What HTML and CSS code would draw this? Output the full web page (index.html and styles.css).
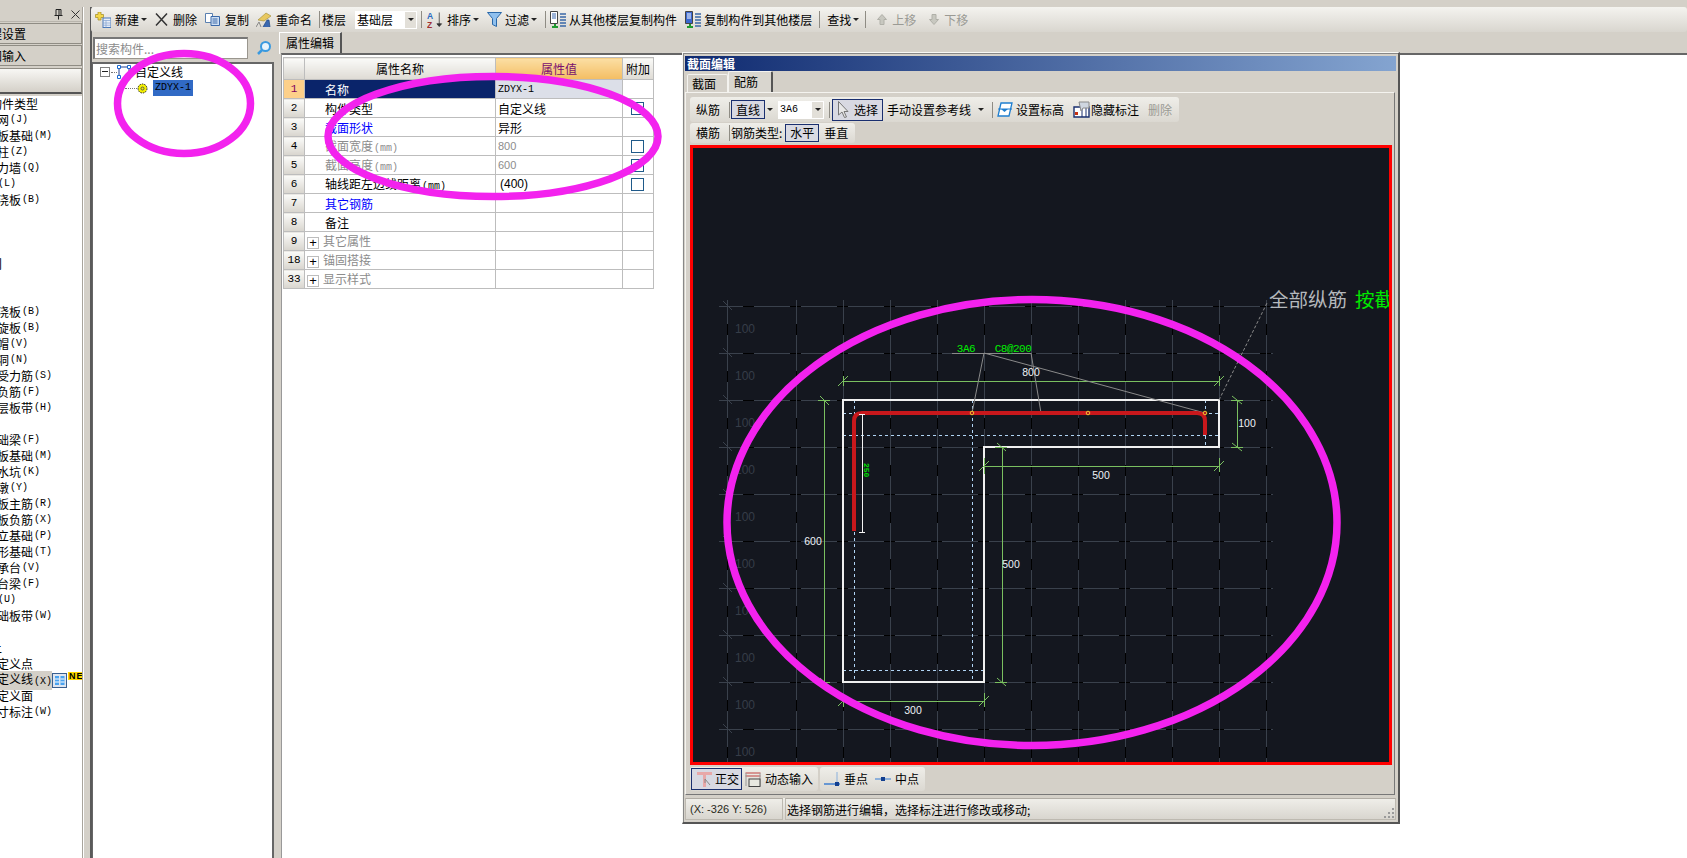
FILE: index.html
```html
<!DOCTYPE html>
<html lang="zh">
<head>
<meta charset="utf-8">
<title>截面编辑</title>
<link rel="stylesheet" href="styles.css">
</head>
<body>
<div class="app">
  <aside class="nav">
    <div class="nav-head">
      <svg class="ico-pin" viewBox="0 0 9 11"><path d="M2 0.5h5v6h-5zM5 1v5.5M0.5 6.5h8M4.5 6.5v4" fill="none" stroke="#222"/></svg>
      <svg class="ico-close" viewBox="0 0 9 9"><path d="M0.5 0.5l8 8M8.5 0.5l-8 8" stroke="#333" fill="none"/></svg>
    </div>
    <div class="nav-btn">工程设置</div>
    <div class="nav-btn">绘图输入</div>
    <div class="nav-btn blank"></div>
    <div class="nav-list">
      <div class="li shift">构件类型</div>
      <div class="li">轴网<span class="lat">(J)</span></div>
      <div class="li">筏板基础<span class="lat">(M)</span></div>
      <div class="li">框柱<span class="lat">(Z)</span></div>
      <div class="li">剪力墙<span class="lat">(Q)</span></div>
      <div class="li">梁<span class="lat">(L)</span></div>
      <div class="li">现浇板<span class="lat">(B)</span></div>
      <div class="li"></div>
      <div class="li"></div>
      <div class="li"></div>
      <div class="li shift">门</div>
      <div class="li"></div>
      <div class="li"></div>
      <div class="li">现浇板<span class="lat">(B)</span></div>
      <div class="li">螺旋板<span class="lat">(B)</span></div>
      <div class="li">柱帽<span class="lat">(V)</span></div>
      <div class="li">板洞<span class="lat">(N)</span></div>
      <div class="li">板受力筋<span class="lat">(S)</span></div>
      <div class="li">板负筋<span class="lat">(F)</span></div>
      <div class="li">楼层板带<span class="lat">(H)</span></div>
      <div class="li"></div>
      <div class="li">基础梁<span class="lat">(F)</span></div>
      <div class="li">筏板基础<span class="lat">(M)</span></div>
      <div class="li">集水坑<span class="lat">(K)</span></div>
      <div class="li">柱墩<span class="lat">(Y)</span></div>
      <div class="li">筏板主筋<span class="lat">(R)</span></div>
      <div class="li">筏板负筋<span class="lat">(X)</span></div>
      <div class="li">独立基础<span class="lat">(P)</span></div>
      <div class="li">条形基础<span class="lat">(T)</span></div>
      <div class="li">桩承台<span class="lat">(V)</span></div>
      <div class="li">承台梁<span class="lat">(F)</span></div>
      <div class="li">桩<span class="lat">(U)</span></div>
      <div class="li">基础板带<span class="lat">(W)</span></div>
      <div class="li"></div>
      <div class="li shift">上</div>
      <div class="li">自定义点</div>
      <div class="li current"><span class="cur-text">自定义线<span class="lat">(X)</span></span>
        <svg class="ico-grid" viewBox="0 0 15 15"><rect x="0.5" y="0.5" width="14" height="14" fill="#dfe6f0" stroke="#3a5f8f"/><path d="M3 3h4v9h-4zM8.500 3h4v9h-4z" fill="#4aa3f0"/><path d="M3 6h4M3 9h4M8.500 6h4M8.500 9h4" stroke="#fff"/></svg>
        <span class="new-tag">NE</span>
      </div>
      <div class="li">自定义面</div>
      <div class="li">尺寸标注<span class="lat">(W)</span></div>
    </div>
  </aside>
  <div class="split-a"></div>
  <main class="main">
    <div class="toolbar">
      <span class="tb tb-new"><svg class="ic16" viewBox="0 0 16 16"><path d="M3 0h3v2.500h2.500v3h-2.500v2.500h-3v-2.500h-2.500v-3h2.500z" fill="#f4d84a" stroke="#a08a20" stroke-width=".7"/><rect x="8" y="6" width="8" height="9.500" fill="#e8eef8" stroke="#4a78b8"/><path d="M8 8.500h8M8 11h8M8 13.200h8M11 8.500v7" stroke="#7fa0d0" stroke-width=".7"/></svg>新建<i class="caret"></i></span>
      <span class="tb tb-del"><svg class="ic13" viewBox="0 0 13 13"><path d="M1 0.500l11 12M12 0.500l-11 12" stroke="#333" stroke-width="1.500" fill="none"/></svg>删除</span>
      <span class="tb tb-copy"><svg class="ic15" viewBox="0 0 15 13"><path d="M0.500 0.500h7v9h-7z" fill="#fff" stroke="#5a80b0"/><path d="M6 3.500h8.500v9h-8.500z" fill="#cfe0f4" stroke="#3a68a8"/><path d="M7.500 6h5M7.500 8h5M7.500 10h5" stroke="#3a68a8"/></svg>复制</span>
      <span class="tb tb-ren"><svg class="ic16" viewBox="0 0 16 16"><path d="M2 8l8-7 5 3-7 5z" fill="#e8c860" stroke="#a08a30" stroke-width=".6"/><path d="M0 15l3-5 2 5" fill="none" stroke="#888"/><path d="M7 15l4-7 2 0 1 7" fill="#3a68b0" stroke="#204880" stroke-width=".7"/></svg>重命名</span>
      <span class="sep s-floor"></span>
      <span class="tb-label">楼层</span>
      <span class="combo floor"><span class="combo-text">基础层</span><span class="combo-arrow"><i class="caret"></i></span></span>
      <span class="sep s-sort"></span>
      <span class="tb tb-sort"><svg class="ic16w" viewBox="0 0 17 18"><text x="0" y="8" class="az a">A</text><text x="0" y="17" class="az z">Z</text><path d="M13 1v14M10.500 13l2.500 3 2.500-3z" stroke="#333" fill="#333" stroke-width=".8"/></svg>排序<i class="caret"></i></span>
      <span class="tb tb-filter"><svg class="ic15" viewBox="0 0 15 15"><path d="M0.500 0.500h14l-5 6v8l-4-2v-6z" fill="#8fc0ee" stroke="#2a68a8"/></svg>过滤<i class="caret"></i></span>
      <span class="sep s-copy"></span>
      <span class="tb tb-from"><svg class="ic17" viewBox="0 0 17 18"><path d="M0.500 0.500h7v12h-7z" fill="#fff" stroke="#444"/><path d="M2 3h4M2 5h4M2 7h4" stroke="#3a68b0"/><path d="M10 3h6M10 6h6M10 9h6M10 12h6M10 15h6" stroke="#3a68a8" stroke-width="1.500"/><path d="M2 15h2v-2h2v2h2v2h-6z" fill="#1f9a30"/></svg>从其他楼层复制构件</span>
      <span class="tb tb-to"><svg class="ic17" viewBox="0 0 17 18"><path d="M0.500 0.500h7v12h-7z" fill="#3a68d0" stroke="#444"/><path d="M2 3h4M2 5h4M2 7h4" stroke="#fff"/><path d="M10 3h6M10 6h6M10 9h6M10 12h6M10 15h6" stroke="#3a68a8" stroke-width="1.500"/><path d="M2 15h2v-2h2v2h2v2h-6z" fill="#1f9a30"/></svg>复制构件到其他楼层</span>
      <span class="sep s-find"></span>
      <span class="tb tb-find">查找<i class="caret"></i></span>
      <span class="sep s-up"></span>
      <span class="tb off tb-up"><svg class="ic10" viewBox="0 0 10 11"><path d="M5 0.500l4.500 5h-2.500v5h-4v-5h-2.500z" fill="#c8c8c0" stroke="#b0b0a8"/></svg>上移</span>
      <span class="tb off tb-down"><svg class="ic10" viewBox="0 0 10 11"><path d="M5 10.500l4.500-5h-2.500v-5h-4v5h-2.500z" fill="#c8c8c0" stroke="#b0b0a8"/></svg>下移</span>
    </div>
    <div class="work">
      <section class="tree-col">
        <div class="search-row">
          <div class="search">搜索构件...</div>
          <svg class="ico-search" viewBox="0 0 16 16"><circle cx="9.500" cy="6.500" r="4.500" fill="#e8f4fc" stroke="#3a9ae0" stroke-width="2"/><path d="M6 10l-4 4" stroke="#3a9ae0" stroke-width="2.500"/></svg>
        </div>
        <div class="tree">
          <div class="node root">
            <span class="minus"></span><span class="dots short"></span>
            <svg class="ico-line" viewBox="0 0 14 14"><path d="M2 2h10v10M2 2v10" fill="none" stroke="#1f3f8f"/><path d="M0.500 0.500h3v3h-3zM10.500 0.500h3v3h-3zM0.500 10.500h3v3h-3z" fill="#fff" stroke="#1a6ad0"/></svg>
            <span class="node-text">自定义线</span>
          </div>
          <div class="node child">
            <span class="dots long"></span>
            <svg class="ico-sun" viewBox="0 0 11 11"><circle cx="5.500" cy="5.500" r="4.500" fill="#f4f000" stroke="#222" stroke-dasharray="1.500 1"/><circle cx="5.500" cy="5.500" r="1.500" fill="#f4f000" stroke="#555"/></svg>
            <span class="node-sel">ZDYX-1</span>
          </div>
        </div>
      </section>
      <div class="split-b"></div>
      <section class="prop-col">
        <div class="tabstrip"><span class="tab-prop">属性编辑</span></div>
        <div class="pane">
          <table class="grid">
            <colgroup><col class="c0"><col class="c1"><col class="c2"><col class="c3"></colgroup>
            <thead>
              <tr><th class="rh"></th><th>属性名称</th><th class="val-head">属性值</th><th>附加</th></tr>
            </thead>
            <tbody>
              <tr><td class="rh sel">1</td><td class="name cur">名称</td><td class="val code">ZDYX-1</td><td></td></tr>
              <tr><td class="rh">2</td><td class="name">构件类型</td><td class="val">自定义线</td><td><span class="chk"></span></td></tr>
              <tr><td class="rh">3</td><td class="name blue">截面形状</td><td class="val">异形</td><td></td></tr>
              <tr><td class="rh">4</td><td class="name grey">截面宽度<span class="lat">(mm)</span></td><td class="val grey lat-val">800</td><td><span class="chk"></span></td></tr>
              <tr><td class="rh">5</td><td class="name grey">截面高度<span class="lat">(mm)</span></td><td class="val grey lat-val">600</td><td><span class="chk"></span></td></tr>
              <tr><td class="rh">6</td><td class="name">轴线距左边线距离<span class="lat">(mm)</span></td><td class="val sans">(400)</td><td><span class="chk"></span></td></tr>
              <tr><td class="rh">7</td><td class="name blue">其它钢筋</td><td></td><td></td></tr>
              <tr><td class="rh">8</td><td class="name">备注</td><td></td><td></td></tr>
              <tr><td class="rh">9</td><td class="name grey"><span class="plus">+</span>其它属性</td><td></td><td></td></tr>
              <tr><td class="rh">18</td><td class="name grey"><span class="plus">+</span>锚固搭接</td><td></td><td></td></tr>
              <tr><td class="rh">33</td><td class="name grey"><span class="plus">+</span>显示样式</td><td></td><td></td></tr>
            </tbody>
          </table>
        </div>
      </section>
    </div>
  </main>
</div>

<div class="win">
  <div class="win-title">截面编辑</div>
  <div class="win-tabs"><span class="wt">截面</span><span class="wt on">配筋</span></div>
  <div class="win-pane">
    <div class="bar bar1">
      <span class="b-t w-zong">纵筋</span><span class="vsep"></span>
      <span class="press p-line">直线</span><i class="caret c1"></i>
      <span class="combo rebar"><span class="combo-text mono">3A6</span><span class="combo-arrow"><i class="caret"></i></span></span>
      <span class="vsep v2"></span>
      <span class="press p-sel"><svg class="ic-cur" viewBox="0 0 11 17"><path d="M0.500 0.500l9.500 10h-4l2.500 5.500-2 .5-2.500-5.500-3.500 3z" fill="#e8e8e8" stroke="#777"/></svg>选择</span>
      <span class="b-t manual">手动设置参考线</span><i class="caret c2"></i>
      <span class="vsep v3"></span>
      <svg class="ic-h" viewBox="0 0 16 15"><path d="M4 1h11l-3 13h-11z" fill="#fff" stroke="#1f7fd0" stroke-width="1.300"/><path d="M4 7l3.500 3 3.500-3z" fill="#1f7fd0"/><path d="M1 7h14" stroke="#1f7fd0"/></svg>
      <span class="b-t set">设置标高</span>
      <svg class="ic-hide" viewBox="0 0 18 17"><path d="M1 6h15v10h-15z" fill="#fff" stroke="#1a2f6f" stroke-width="1.400"/><path d="M9 6v10M13 6v10" stroke="#1a2f6f"/><path d="M6 1h10v6h-6l-2 3z" fill="#cfd6e0" stroke="#8a8a8a"/><rect x="2" y="11" width="3" height="3" fill="#c83010"/></svg>
      <span class="b-t">隐藏标注</span>
      <span class="b-t off del">删除</span>
    </div>
    <div class="bar bar2">
      <span class="b-t w-zong">横筋</span><span class="vsep"></span>
      <span class="b-t type">钢筋类型:</span>
      <span class="press p-h">水平</span>
      <span class="b-t vert">垂直</span>
    </div>
    <div class="canvas">
      <svg class="drawing" viewBox="693 148 696 614">
        <g class="g-base">
          <path d="M727 300V762M796 300V762M843 300V762M890 300V762M937 300V762M984 300V762M1031 300V762M1078 300V762M1125 300V762M1172 300V762M1219 300V762M1266 300V762"/>
          <path d="M719 306H1273M719 353H1273M719 400H1273M719 447H1273M719 494H1273M719 541H1273M719 588H1273M719 635H1273M719 682H1273M719 729H1273"/>
        </g>
        <g class="g-over">
          <path d="M727 300V762M796 300V762M843 300V762M890 300V762M937 300V762M984 300V762M1031 300V762M1078 300V762M1125 300V762M1172 300V762M1219 300V762M1266 300V762"/>
          <path d="M719 306H1273M719 353H1273M719 400H1273M719 447H1273M719 494H1273M719 541H1273M719 588H1273M719 635H1273M719 682H1273M719 729H1273"/>
        </g>
        <path class="g-tick" d="M723 301l9 9M723 348l9 9M723 395l9 9M723 442l9 9M723 489l9 9M723 536l9 9M723 583l9 9M723 630l9 9M723 677l9 9M723 724l9 9"/>
        <g class="lbl100">
          <text x="735" y="333">100</text><text x="735" y="380">100</text><text x="735" y="427">100</text>
          <text x="735" y="474">100</text><text x="735" y="521">100</text><text x="735" y="568">100</text>
          <text x="735" y="615">100</text><text x="735" y="662">100</text><text x="735" y="709">100</text><text x="735" y="756">100</text>
        </g>
        <path class="dash-blue" d="M843 413H1219M843 435H1219M843 670H984M854 400V682M972 400V682M1205 400V447"/>
        <path class="outline" d="M843 400H1219V447H984V682H843Z"/>
        <path class="dim" d="M843 381H1219M843 376v10M1219 376v10M1237 400V447M1231 400h12M1231 447h12M984 466H1219M984 458v16M1219 458v14M1002 447V682M995 447h12M995 682h12M824 400V682M818 400h12M818 682h12M843 701H984M843 695v12M984 693v14"/>
        <path class="dim-tick" d="M838 386l10-10M1214 386l10-10M1232 396l10 8M1232 443l10 8M979 471l10-10M1214 471l10-10M997 443l9 8M997 678l9 8M820 396l9 9M820 678l9 8M838 706l10-10M979 706l10-10"/>
        <path class="lead" d="M952 353H1031"/>
        <path class="lead-d" d="M984 353L972 413M984 353L1205 413M1031 353L1041 413"/>
        <path class="lead-dot" d="M1219 400L1267 303"/>
        <path class="rebar-line" d="M854 531V421Q854 413 862 413H1197Q1205 413 1205 421V435"/>
        <path class="white-dim" d="M862 414V532M859 414h6M859 532h6"/>
        <g class="pts"><circle cx="972" cy="413" r="1.800"/><circle cx="1088" cy="413" r="1.800"/><circle cx="1205" cy="413" r="1.800"/></g>
        <text class="lbl-green" x="966" y="352" text-anchor="middle">3A6</text>
        <text class="lbl-green" x="1013" y="352" text-anchor="middle">C8@200</text>
        <text class="lbl-tiny" transform="translate(864,463) rotate(90)">250</text>
        <g class="lbl-white">
          <text x="1031" y="376" text-anchor="middle">800</text>
          <text x="1247" y="427" text-anchor="middle">100</text>
          <text x="1101" y="479" text-anchor="middle">500</text>
          <text x="813" y="545" text-anchor="middle">600</text>
          <text x="1011" y="568" text-anchor="middle">500</text>
          <text x="913" y="714" text-anchor="middle">300</text>
        </g>
        <text class="lbl-big" x="1269" y="307">全部纵筋<tspan class="lbl-big-g" dx="8">按截面</tspan></text>
      </svg>
    </div>
    <div class="snapbar">
      <div class="snap-group g1">
        <span class="press p-ortho"><svg class="ic-ortho" viewBox="0 0 15 16"><path d="M0 1h15v3h-6v12h-3v-12h-6z" fill="#e8a8a8"/><path d="M8 8l5 6M8 8v4" stroke="#888"/></svg>正交</span>
        <svg class="ic-dyn" viewBox="0 0 16 15"><path d="M0.500 1h15M0.500 4h15" stroke="#c04040"/><path d="M1 1v13M15 1v13" stroke="#999"/><rect x="4" y="7" width="11" height="7.500" fill="#e8e8e0" stroke="#444"/></svg>
        <span class="b-t">动态输入</span>
      </div>
      <div class="snap-group g2">
        <svg class="ic-pt" viewBox="0 0 16 14"><path d="M0 12h16" stroke="#3f7fd0" stroke-width="1.500"/><path d="M13 0v14" stroke="#8ab0dc"/><rect x="11" y="10" width="4" height="4" fill="#123f90"/></svg>
        <span class="b-t p1">垂点</span>
        <svg class="ic-pt" viewBox="0 0 16 14"><path d="M0 7h16" stroke="#6f9fd8" stroke-width="1.500"/><rect x="6" y="5" width="4" height="4" fill="#123f90"/></svg>
        <span class="b-t">中点</span>
      </div>
    </div>
  </div>
  <div class="status">
    <span class="st st-xy">(X: -326 Y: 526)</span>
    <span class="st st-msg">选择钢筋进行编辑，选择标注进行修改或移动;</span>
    <svg class="grip" viewBox="0 0 12 12"><path d="M9 1h2v2h-2zM9 5h2v2h-2zM5 5h2v2h-2zM9 9h2v2h-2zM5 9h2v2h-2zM1 9h2v2h-2z" fill="#9a9a9a"/></svg>
  </div>
</div>

<svg class="marks" viewBox="0 0 1687 858">
  <ellipse cx="184" cy="103.500" rx="66.500" ry="50"/>
  <ellipse cx="493" cy="136.500" rx="165" ry="60"/>
  <ellipse cx="1032" cy="522.500" rx="305" ry="223"/>
</svg>
</body>
</html>
```
FILE: styles.css
```css
* { box-sizing: border-box; }
html, body { margin: 0; padding: 0; }
body {
  width: 1687px; height: 858px; overflow: hidden; position: relative;
  background: #d4d0c8; color: #000;
  font: 12px/16px "Noto Sans CJK SC", "Liberation Sans", sans-serif;
}
.lat { font: 10px/16px "Liberation Mono", monospace; margin-left: 1px; }
i.caret { display: inline-block; width: 0; height: 0; border: 3px solid transparent; border-top: 3px solid #222; border-bottom: 0; vertical-align: middle; }
.app { display: flex; height: 858px; padding-top: 7px; background: #d4d0c8; }

/* left nav */
.nav { width: 83px; display: flex; flex-direction: column; overflow: hidden; flex: none; border-right: 1px solid #a8a49c; }
.nav-head { height: 15px; display: flex; align-items: center; justify-content: flex-end; gap: 8px; padding-right: 2px; margin-bottom: 1px; background: #d4d0c8; border-bottom: 1px solid #b8b4ac; }
.ico-pin { width: 9px; height: 11px; }
.ico-close { width: 9px; height: 9px; }
.nav-btn { height: 21px; line-height: 19px; margin: 0 0 1px -22px; white-space: nowrap; font-size: 12px; background: #d4d0c8; border: 1px solid #8f8c84; border-left: 0; }
.nav-btn.blank { height: 26px; margin: 1px 0 2px -22px; background: linear-gradient(#f8f7f4, #d4d0c8); border-bottom: 2px solid #555; }
.nav-list { flex: 1; background: #fff; overflow: hidden; }
.li { height: 16px; margin-left: -15px; white-space: nowrap; display: flex; align-items: center; }
.li.shift { margin-left: -10px; }
.li.current { position: relative; }
.cur-text { background: #d4d0c8; padding-left: 15px; margin-left: -15px; width: 82px; flex: none; }
.ico-grid { width: 15px; height: 15px; flex: none; }
.new-tag { font: bold 9px/8px "Liberation Sans", sans-serif; letter-spacing: 1px; background: #ffd800; margin: -8px 0 0 1px; padding: 0 1px; height: 8px; flex: none; }
.split-a { width: 9px; flex: none; background: #d4d0c8; border-left: 1px solid #fff; border-right: 2px solid #5a5a5a; }

/* toolbar */
.main { flex: 1; display: flex; flex-direction: column; min-width: 0; }
.toolbar { height: 25px; margin-left: -1px; display: flex; align-items: center; padding-left: 4px; border-radius: 3px; background: linear-gradient(#f4f3ef, #d9d6cf); white-space: nowrap; }
.tb { display: flex; align-items: center; }
.tb.off { color: #9a9a94; }
.ic16 { width: 16px; height: 16px; margin-right: 4px; flex: none; }
.ic13 { width: 13px; height: 13px; margin-right: 5px; flex: none; }
.ic15 { width: 15px; height: 15px; margin-right: 5px; flex: none; }
.tb-filter .ic15 { margin-right: 3px; }
.ic16w { width: 16px; height: 18px; margin-right: 4px; flex: none; }
.ic17 { width: 17px; height: 18px; margin-right: 2px; flex: none; }
.ic10 { width: 10px; height: 11px; margin-right: 5px; flex: none; }
.tb .caret { margin-left: 2px; }
.az { font: bold 9px "Liberation Sans", sans-serif; }
.az.a { fill: #2a6ac0; }
.az.z { fill: #a03030; }
.tb-del { margin-left: 8px; }
.tb-copy { margin-left: 8px; }
.tb-ren { margin-left: 7px; }
.sep { width: 1px; height: 17px; background: #8f8c84; flex: none; }
.s-floor { margin-left: 7px; }
.tb-label { margin-left: 2px; }
.combo { display: flex; background: #fff; align-items: stretch; flex: none; }
.combo.floor { width: 62px; height: 18px; margin-left: 9px; padding: 1px; }
.combo-text { flex: 1; padding-left: 1px; line-height: 15px; }
.combo-arrow { width: 11px; background: #e2dfd8; display: flex; align-items: center; justify-content: center; }
.s-sort { margin-left: 4px; }
.tb-sort { margin-left: 5px; }
.tb-filter { margin-left: 8px; }
.s-copy { margin-left: 8px; }
.tb-from { margin-left: 4px; }
.tb-to { margin-left: 8px; }
.s-find { margin-left: 7px; }
.tb-find { margin-left: 7px; }
.s-up { margin-left: 6px; }
.tb-up { margin-left: 11px; }
.tb-down { margin-left: 13px; }

/* work area */
.work { flex: 1; display: flex; min-height: 0; }
.tree-col { width: 182px; flex: none; display: flex; flex-direction: column; }
.search-row { height: 30px; display: flex; align-items: flex-start; padding: 5px 0 0 1px; gap: 8px; }
.search { width: 155px; height: 22px; background: #fff; border: 1px solid #9a968e; border-top: 2px solid #777; border-left: 2px solid #777; color: #8c8c8c; font-size: 12px; line-height: 19px; padding-left: 1px; }
.ico-search { width: 16px; height: 16px; margin-top: 3px; }
.tree { flex: 1; background: #fff; border: 1px solid #666; border-width: 2px 2px 0 1px; }
.node { height: 16px; display: flex; align-items: center; white-space: nowrap; }
.minus { width: 10px; height: 10px; margin-left: 7px; border: 1px solid #808080; position: relative; background: #fff; }
.minus::after { content: ""; position: absolute; left: 1px; right: 1px; top: 3px; height: 1px; background: #222; }
.dots { border-top: 1px dotted #777; height: 0; flex: none; }
.dots.short { width: 6px; margin-left: 1px; }
.dots.long { width: 12px; margin-left: 32px; }
.ico-line { width: 14px; height: 14px; flex: none; }
.node-text { margin-left: 4px; }
.ico-sun { width: 11px; height: 11px; flex: none; }
.node-sel { margin-left: 5px; width: 40px; height: 16px; background: #316ac5; font: 10px/16px "Liberation Mono", monospace; text-align: center; color: #000; }
.split-b { width: 8px; flex: none; background: #d4d0c8; }
.prop-col { flex: 1; display: flex; flex-direction: column; min-width: 0; }
.tabstrip { height: 22px; }
.tab-prop { display: block; width: 63px; height: 22px; line-height: 20px; padding-left: 6px; margin-left: -3px; background: #d9d6cf; border-top: 1px solid #fff; border-left: 1px solid #fff; border-right: 2px solid #555; }
.pane { flex: 1; background: #fff; margin: -1px 0 0 -1px; padding: 2px 0 0 1px; border-top: 2px solid #666; border-left: 1px solid #999; }
.grid { border-collapse: collapse; table-layout: fixed; width: 370px; font-size: 12px; }
.c0 { width: 21px; } .c1 { width: 191px; } .c2 { width: 127px; } .c3 { width: 31px; }
.grid th, .grid td { height: 19px; padding: 0; border: 1px solid #bdbdbd; overflow: hidden; white-space: nowrap; line-height: 15px; font-weight: 400; }
.grid thead th { height: 22px; background: linear-gradient(#fafaf8, #dedbd4); }
.grid th.val-head { background: linear-gradient(#fbdfa4, #f4bd62); color: #7a1070; }
.grid .rh { background: linear-gradient(#fbfbf9, #d8d5ce); text-align: center; }
.grid td.rh { font: 11px/15px "Liberation Mono", monospace; }
.grid .rh.sel { background: #fdd08a; color: #800060; }
.grid .lat { line-height: 12px; }
.name { padding-left: 20px !important; }
.grid .name.cur { background: #0a246a; color: #fff; }
.val { padding-left: 2px !important; }
.grid .val.code { background: #dcdfe8; font: 10px/15px "Liberation Mono", monospace; }
.lat-val { font: 11px/15px "Liberation Sans", sans-serif !important; }
.val.sans { font: 12px/15px "Liberation Sans", sans-serif; padding-left: 4px !important; }
.blue { color: #0000ff; }
.grey { color: #8c8c8c; }
.chk { display: block; width: 13px; height: 13px; margin: 1px 0 0 8px; border: 1px solid #1f5a8a; background: #fff; }
.plus { display: inline-block; width: 12px; height: 12px; margin: 0 4px 0 -18px; border: 1px solid #bdbdbd; color: #000; font: 13px/10px "Liberation Sans", sans-serif; text-align: center; vertical-align: -1px; }

/* floating window */
.win { position: absolute; left: 682px; top: 52px; width: 718px; height: 772px; display: flex; flex-direction: column; background: #d4d0c8; border: 1px solid #f8f8f4; border-right: 2px solid #555; border-bottom: 2px solid #555; padding: 3px 2px 1px 2px; box-shadow: inset 1px 1px 0 #888; }
.win-title { height: 15px; flex: none; color: #fff; font-weight: 700; font-size: 12px; line-height: 15px; padding-left: 2px; background: linear-gradient(90deg, #0f2a70, #84a4d0); }
.win-tabs { height: 21px; flex: none; display: flex; align-items: flex-end; padding-left: 2px; }
.wt { width: 41px; height: 18px; line-height: 18px; padding-left: 4px; border: 1px solid #f4f3ef; border-bottom: 0; border-radius: 2px 2px 0 0; }
.wt.on { width: 45px; height: 21px; line-height: 19px; padding-left: 5px; background: #d9d6cf; border-right: 2px solid #555; }
.win-pane { flex: 1; min-height: 0; margin: 0 1px 3px 0; border: 1px solid #f4f3ef; border-right: 1px solid #777; border-bottom: 1px solid #777; padding: 4px 3px 0 4px; display: flex; flex-direction: column; }
.bar { display: flex; align-items: center; flex: none; background: linear-gradient(#efeee9, #dbd8d1); border-radius: 3px; white-space: nowrap; padding-left: 6px; }
.bar1 { width: 489px; height: 25px; }
.bar2 { width: 165px; height: 20px; margin-top: 1px; }
.b-t { flex: none; }
.b-t.off { color: #9a9a94; }
.w-zong { width: 24px; }
.vsep { width: 1px; height: 16px; background: #8f8c84; margin: 0 1px 0 9px; flex: none; }
.press { display: flex; align-items: center; justify-content: center; background: #d8d9e2; border: 1px solid #1a2f6f; flex: none; }
.p-line { width: 34px; height: 19px; }
i.caret.c1 { margin-left: 2px; flex: none; }
.combo.rebar { width: 46px; height: 18px; margin-left: 5px; padding: 1px; }
.mono { font: 10px/15px "Liberation Mono", monospace; }
.vsep.v2 { margin: 0 2px 0 5px; }
.p-sel { width: 51px; height: 22px; justify-content: flex-start; padding-left: 5px; }
.ic-cur { width: 11px; height: 17px; margin-right: 5px; }
.manual { margin-left: 4px; }
i.caret.c2 { margin-left: 7px; flex: none; }
.vsep.v3 { margin: 0 4px 0 8px; }
.ic-h { width: 16px; height: 15px; flex: none; margin-right: 3px; }
.set { margin-right: 9px; }
.ic-hide { width: 18px; height: 17px; flex: none; }
.del { margin-left: 9px; }
.p-h { width: 34px; height: 18px; margin-left: 3px; }
.vert { margin-left: 5px; }
.canvas { width: 702px; height: 620px; margin-top: 2px; flex: none; border: 3px solid #f00; background: #14171f; overflow: hidden; }
.drawing { display: block; width: 696px; height: 614px; }
.g-base path { stroke: #000; stroke-width: 1; fill: none; shape-rendering: crispEdges; }
.g-over path { stroke: #3a414c; stroke-width: 1; fill: none; stroke-dasharray: 36 11; stroke-dashoffset: 12; shape-rendering: crispEdges; }
.g-tick { stroke: #3a414c; fill: none; }
.lbl100 text { fill: #363d48; font: 12px "Liberation Sans", sans-serif; }
.dash-blue { stroke: #b0d4f4; stroke-width: 1; stroke-dasharray: 3 3; fill: none; shape-rendering: crispEdges; }
.outline { stroke: #f0f0f0; stroke-width: 2; fill: none; shape-rendering: crispEdges; }
.dim { stroke: #7ac060; stroke-width: 1; fill: none; shape-rendering: crispEdges; }
.dim-tick { stroke: #7ac060; stroke-width: 1; fill: none; }
.lead { stroke: #8a8a8a; stroke-width: 1; fill: none; shape-rendering: crispEdges; }
.lead-d { stroke: #8a8a8a; stroke-width: 1; fill: none; }
.lead-dot { stroke: #8a8a8a; stroke-width: 1; stroke-dasharray: 3 2; fill: none; }
.rebar-line { stroke: #c8181c; stroke-width: 4; fill: none; }
.white-dim { stroke: #f4f4f4; stroke-width: 1; fill: none; shape-rendering: crispEdges; }
.pts circle { fill: #b02020; stroke: #f0c830; stroke-width: 1; }
.lbl-green { fill: #00f000; font: 11px "Liberation Mono", monospace; letter-spacing: -0.5px; }
.lbl-tiny { fill: #00e000; font: bold 8px "Liberation Mono", monospace; }
.lbl-white text { fill: #eef2f6; font: 10.500px "Liberation Sans", sans-serif; }
.lbl-big { fill: #b4b8bc; font: 19.500px "Noto Sans CJK SC", sans-serif; }
.lbl-big-g { fill: #00e800; }
.snapbar { display: flex; gap: 2px; margin-top: 2px; flex: none; height: 24px; }
.snap-group { display: flex; align-items: center; background: linear-gradient(#efeee9, #dbd8d1); border-radius: 3px; padding: 0 5px 0 1px; }
.p-ortho { width: 51px; height: 22px; justify-content: flex-start; padding-left: 5px; }
.ic-ortho { width: 15px; height: 16px; margin-right: 3px; }
.ic-dyn { width: 16px; height: 15px; margin: 0 4px 0 3px; flex: none; }
.g2 { padding: 0 6px 0 4px; }
.ic-pt { width: 16px; height: 14px; margin-right: 4px; flex: none; }
.p1 { margin-right: 7px; }
.status { height: 23px; flex: none; display: flex; gap: 2px; position: relative; background: linear-gradient(#f0efea, #d6d3cc); }
.st { height: 22px; line-height: 21px; border: 1px solid #bdb9b0; border-top-color: #b0aca4; display: block; white-space: nowrap; }
.st-xy { width: 98px; padding-left: 4px; font: 11px/21px "Liberation Sans", sans-serif; color: #2a2a20; }
.st-msg { flex: 1; padding-left: 1px; }
.grip { position: absolute; right: 1px; bottom: 2px; width: 12px; height: 12px; }

/* hand-drawn annotation layer */
.marks { position: absolute; left: 0; top: 0; width: 1687px; height: 858px; pointer-events: none; }
.marks ellipse { fill: none; stroke: #f322ee; stroke-width: 7.500; }
```
